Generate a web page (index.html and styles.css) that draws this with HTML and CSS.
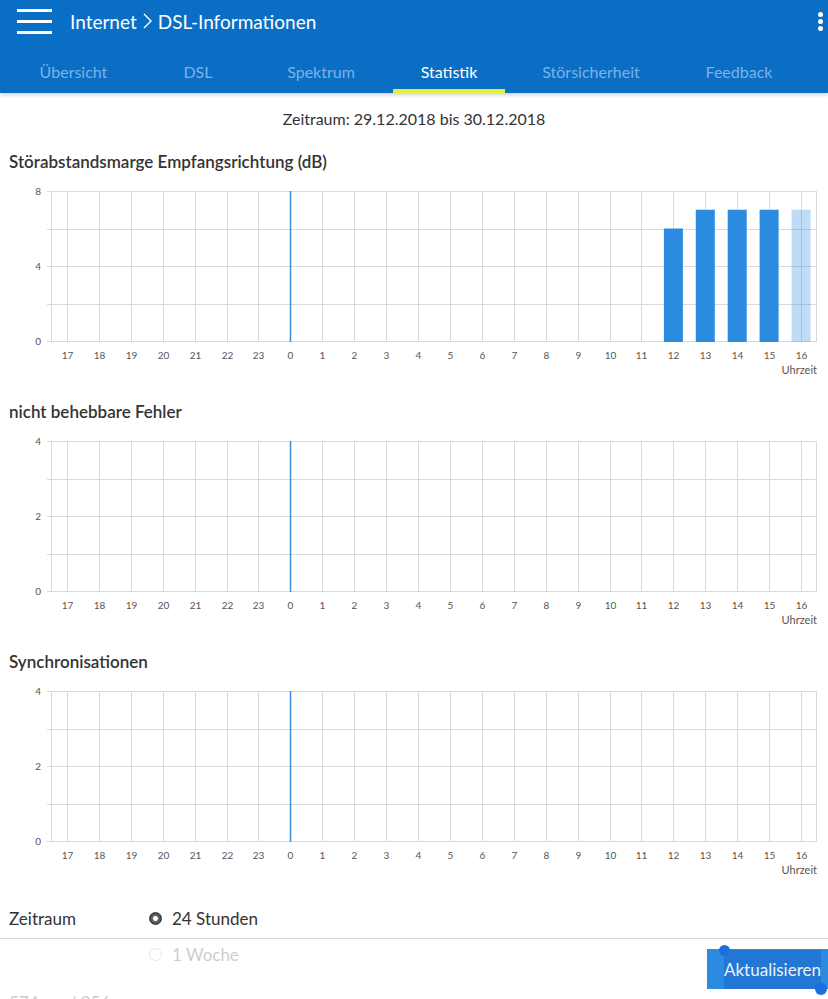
FILE: index.html
```html
<!DOCTYPE html>
<html lang="de">
<head>
    <meta charset="UTF-8">
    <meta name="viewport" content="width=device-width, initial-scale=1.0">
    <title>DSL-Informationen</title>
    <link rel="stylesheet" href="styles.css">
</head>
<body>
    <header id="header">
        <div class="topbar">
            <div class="menu-icon"><span></span><span></span><span></span></div>
            <div class="crumbs">
                Internet
                <svg class="chevron" width="9" height="16" viewBox="0 0 9 16"><polyline points="1,1 8,8 1,15"/></svg>
                DSL-Informationen
            </div>
            <div class="kebab"><span></span><span></span><span></span></div>
        </div>
        <nav class="tabs">
            <div class="tab">Übersicht</div>
            <div class="tab">DSL</div>
            <div class="tab">Spektrum</div>
            <div class="tab active">Statistik</div>
            <div class="tab">Störsicherheit</div>
            <div class="tab">Feedback</div>
        </nav>
    </header>

    <div class="period">Zeitraum: 29.12.2018 bis 30.12.2018</div>

    <section class="chart">
        <h2>Störabstandsmarge Empfangsrichtung (dB)</h2>
        <svg id="chart-snr" class="plot" width="828" height="202"></svg>
    </section>

    <section class="chart">
        <h2>nicht behebbare Fehler</h2>
        <svg id="chart-errors" class="plot" width="828" height="202"></svg>
    </section>

    <section class="chart">
        <h2>Synchronisationen</h2>
        <svg id="chart-sync" class="plot" width="828" height="202"></svg>
    </section>

    <div id="range">
        <div class="range-row">
            <div class="range-label">Zeitraum</div>
            <span class="radio checked"></span>
            <span>24 Stunden</span>
        </div>
        <div class="range-row">
            <div class="range-label"></div>
            <span class="radio"></span>
            <span>1 Woche</span>
        </div>
        <div class="range-note">574 ms / 956 ms</div>
    </div>

    <div id="footer">
        <button class="refresh"><span class="selected">Aktualisieren</span></button>
    </div>

    <script>
        const hours = [17, 18, 19, 20, 21, 22, 23, 0, 1, 2, 3, 4, 5, 6, 7, 8, 9, 10, 11, 12, 13, 14, 15, 16];

        function drawChart(id, max, bars) {
            const svg = document.getElementById(id);
            const left = 51, right = 817, top = 17, bottom = 167;
            const band = (right - left) / hours.length;
            let out = '';

            // horizontal grid
            for (let k = 0; k <= 4; k++) {
                const y = Math.round(top + (bottom - top) * k / 4) + 0.5;
                out += `<line class="grid" x1="47" x2="${right}" y1="${y}" y2="${y}"/>`;
                if (k % 2 === 0) {
                    out += `<text class="ylabel" x="41" y="${y + 3.5}">${max - max * k / 4}</text>`;
                }
            }

            // vertical grid and hour labels
            out += `<line class="grid" x1="${left + 0.5}" x2="${left + 0.5}" y1="${top}" y2="${bottom + 1}"/>`;
            out += `<line class="grid" x1="${right - 0.5}" x2="${right - 0.5}" y1="${top}" y2="${bottom + 1}"/>`;
            hours.forEach((h, i) => {
                const x = Math.round(left + band * (i + 0.5)) + 0.5;
                out += `<line class="grid" x1="${x}" x2="${x}" y1="${top}" y2="${bottom + 1}"/>`;
                out += `<text class="xlabel" x="${x}" y="${bottom + 18}">${h}</text>`;
            });

            // bars
            bars.forEach(b => {
                const i = hours.indexOf(b.hour);
                const cx = left + band * (i + 0.5);
                const y = bottom - (bottom - top) * b.value / max;
                out += `<rect class="${b.current ? 'bar current' : 'bar'}" x="${cx - 9.5}" y="${y}" width="19" height="${bottom - y + 1}"/>`;
            });

            // midnight marker
            const mx = Math.round(left + band * 7.5) + 0.5;
            out += `<line class="midnight" x1="${mx}" x2="${mx}" y1="${top}" y2="${bottom + 1}"/>`;

            out += `<text class="unit" x="${right}" y="${bottom + 33}">Uhrzeit</text>`;
            svg.innerHTML = out;
        }

        drawChart('chart-snr', 8, [
            { hour: 12, value: 6 },
            { hour: 13, value: 7 },
            { hour: 14, value: 7 },
            { hour: 15, value: 7 },
            { hour: 16, value: 7, current: true }
        ]);
        drawChart('chart-errors', 4, []);
        drawChart('chart-sync', 4, []);
    </script>
</body>
</html>
```

FILE: styles.css
```css
body {
    margin: 0;
    width: 828px;
    font-family: "Lato", "Open Sans", sans-serif;
    color: #333;
    background-color: #fff;
}

#header {
    background-color: #0a6ec4;
    color: #fff;
    box-shadow: 0 2px 4px rgba(0, 0, 0, 0.18);
}

.topbar {
    display: flex;
    align-items: center;
    height: 42px;
}

.menu-icon {
    display: flex;
    flex-direction: column;
    justify-content: space-between;
    width: 35px;
    height: 25px;
    margin: 0 18px 0 17px;
}

.menu-icon span {
    display: block;
    height: 3px;
    background-color: #fff;
}

.crumbs {
    flex: 1;
    display: flex;
    align-items: center;
    gap: 6px;
    font-size: 19px;
}

.chevron {
    fill: none;
    stroke: #fff;
    stroke-width: 1.4;
}

.kebab {
    display: flex;
    flex-direction: column;
    gap: 2px;
    margin-right: 5px;
}

.kebab span {
    width: 5px;
    height: 5px;
    border-radius: 50%;
    background-color: #fff;
}

.tabs {
    display: grid;
    grid-template-columns: 147px 102px 144px 112px 172px 124px;
    height: 51px;
}

.tab {
    padding-top: 20px;
    text-align: center;
    font-size: 16px;
    line-height: 20px;
    color: #7db2e6;
    border-bottom: 4px solid transparent;
}

.tab.active {
    color: #fff;
    border-bottom-color: #e2ee3a;
}

.period {
    margin: 14px 0 19px;
    text-align: center;
    font-size: 16px;
    line-height: 24px;
}

.chart {
    margin-bottom: 24px;
}

.chart h2 {
    margin: 0 0 0 9px;
    font-size: 17px;
    font-weight: 600;
    line-height: 24px;
}

.plot {
    display: block;
    font-family: "Lato", "Open Sans", sans-serif;
}

.plot .grid {
    stroke: #d9d9d9;
    stroke-width: 1;
    shape-rendering: crispEdges;
}

.plot .midnight {
    stroke: #3a8ee0;
    stroke-width: 1.5;
}

.plot .bar {
    fill: #2a8be0;
}

.plot .bar.current {
    fill: rgba(42, 139, 224, 0.3);
}

.plot .ylabel {
    font-size: 10px;
    fill: #555;
    text-anchor: end;
}

.plot .xlabel {
    font-size: 10px;
    fill: #555;
    text-anchor: middle;
}

.plot .unit {
    font-size: 11px;
    fill: #555;
    text-anchor: end;
}

#range {
    margin-top: 1px;
}

.range-row {
    display: flex;
    align-items: center;
    height: 36px;
    font-size: 17px;
}

.range-label {
    width: 140px;
    padding-left: 9px;
}

.radio {
    width: 13px;
    height: 13px;
    margin-right: 10px;
    border-radius: 50%;
    box-sizing: border-box;
    border: 1px solid #999;
    background-color: #fff;
}

.radio.checked {
    border-color: #333;
    background: radial-gradient(circle, #fff 0, #fff 2px, #666 3px, #444 6px);
}

.range-note {
    padding: 20px 0 0 9px;
    font-size: 17px;
}

#footer {
    position: fixed;
    left: 0;
    right: 0;
    bottom: 0;
    height: 60px;
    display: flex;
    justify-content: flex-end;
    align-items: flex-start;
    border-top: 1px solid #d6d6d6;
    background-color: rgba(255, 255, 255, 0.75);
}

.refresh {
    width: 121px;
    height: 40px;
    margin-top: 10px;
    padding: 0 0 0 17px;
    border: none;
    text-align: left;
    font-family: "Lato", "Open Sans", sans-serif;
    font-size: 17px;
    color: #e8f2fc;
    background-color: #2a8be0;
}

.selected {
    position: relative;
    padding: 9px 0;
    background-color: rgba(20, 80, 190, 0.35);
}

.selected::before,
.selected::after {
    content: "";
    position: absolute;
    width: 11px;
    height: 11px;
    border-radius: 50%;
    background-color: #1b6fe0;
}

.selected::before {
    left: -5px;
    top: -5px;
}

.selected::after {
    right: -6px;
    bottom: -6px;
    width: 12px;
    height: 12px;
}
```
